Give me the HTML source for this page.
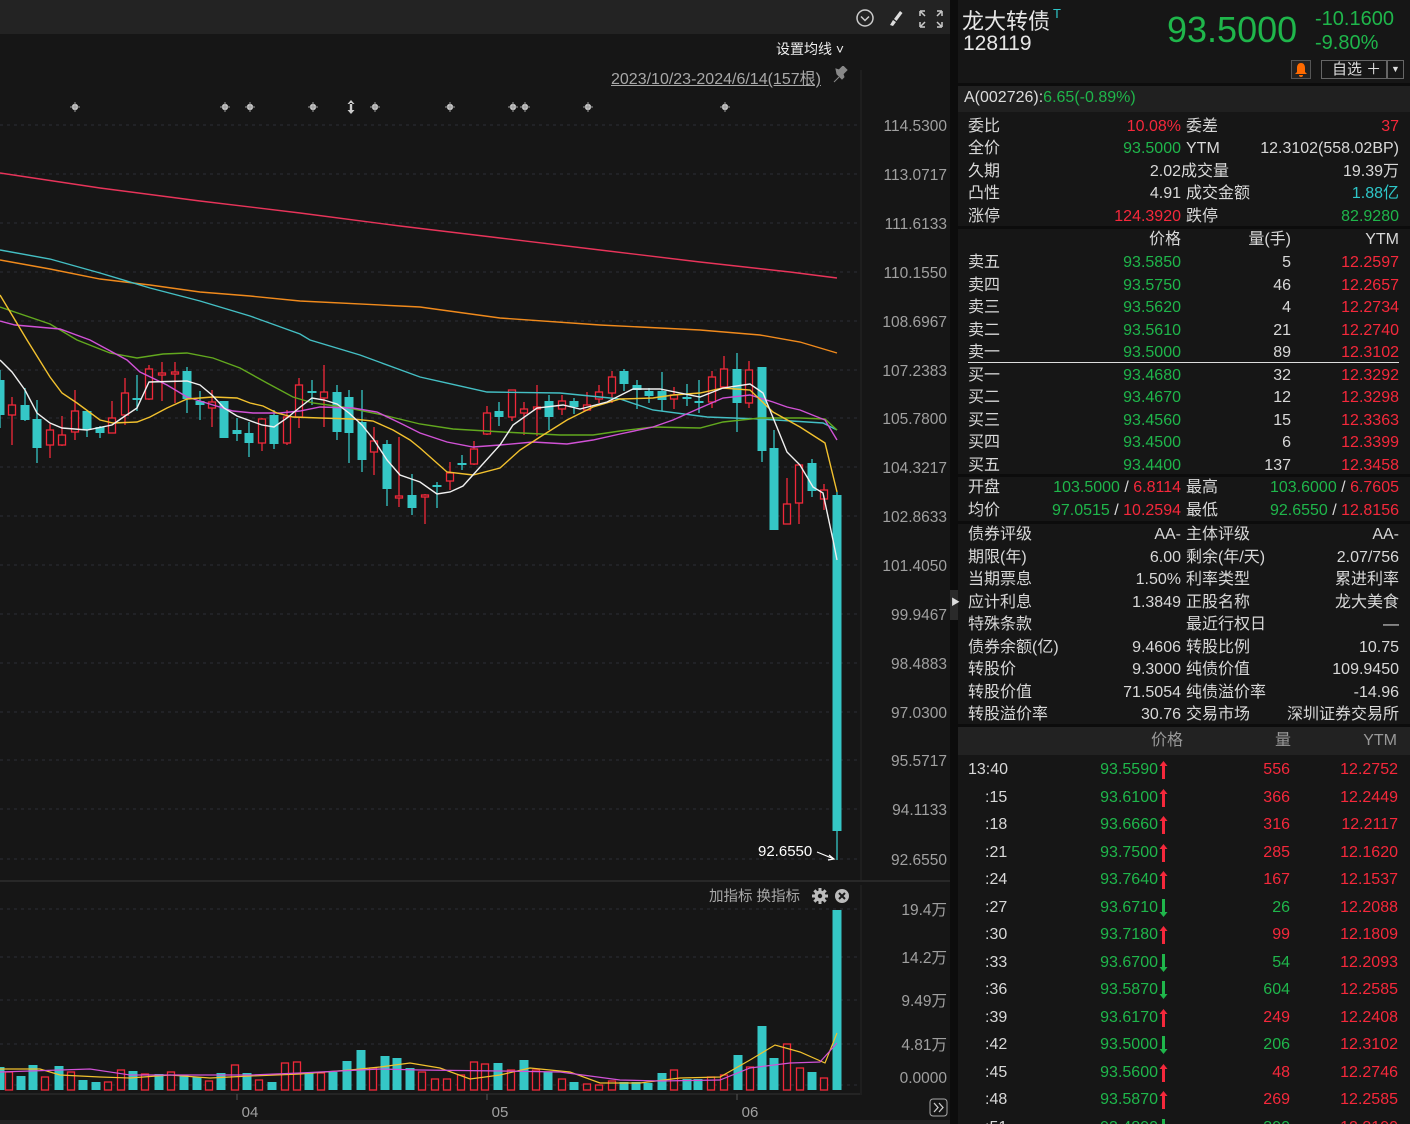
<!DOCTYPE html>
<html><head><meta charset="utf-8">
<style>
*{margin:0;padding:0;box-sizing:border-box}
html,body{width:1410px;height:1124px;overflow:hidden}
body{background:#161616;font-family:"Liberation Sans","Noto Sans CJK SC",sans-serif;color:#d8d8d8;position:relative}
.a{position:absolute;white-space:nowrap}
.g{color:#1fb64b}.r{color:#f5283b}.t{color:#2ec6c8}
.row{position:absolute;left:958px;width:452px;height:22px;font-size:16px;line-height:22px}
.row > span{position:absolute}
</style></head><body>
<div class="a" style="left:0;top:0;width:950px;height:34px;background:#232323"></div>
<svg class="a" style="left:855px;top:8px" width="90" height="22" viewBox="0 0 90 22">
 <circle cx="10" cy="10" r="8" fill="none" stroke="#ccc" stroke-width="1.5"/><path d="M6 8.5l4 4 4-4" fill="none" stroke="#ccc" stroke-width="1.5"/>
 <path d="M35 17l3-5 3 2-3 4z M39 11l6-8 2.5 2-6 8z" fill="#ddd"/>
 <path d="M65 3h5M65 3v5M87 3h-5M87 3v5M65 19h5M65 19v-5M87 19h-5M87 19v-5M66 4l4 4M86 4l-4 4M66 18l4-4M86 18l-4-4" stroke="#ccc" stroke-width="1.5" fill="none"/>
</svg>
<div class="a" style="left:776px;top:39px;font-size:14px;color:#eee">设置均线 ˅</div>
<div class="a" style="left:611px;top:65px;font-size:16px;color:#a8a8a8;text-decoration:underline">2023/10/23-2024/6/14(157根)</div>
<svg class="a" style="left:831px;top:66px" width="18" height="18"><path d="M3 16l5-5M6 8l5 5 2-2-1-3 4-4-4-4-4 4-3-1z" fill="#888" stroke="#888" stroke-width="1"/></svg>
<div class="a" style="left:950px;top:0;width:8px;height:1124px;background:#0c0c0c"></div>
<div class="a" style="left:950px;top:590px;width:8px;height:30px;background:#2a2a2a"></div>
<div class="a" style="left:951px;top:595px;font-size:9px;color:#ddd">▶</div>

<svg id="ch" class="a" style="left:0;top:0" width="950" height="1124"></svg>

<div class="a" style="left:962px;top:4px;font-size:22px;color:#e6e6e6">龙大转债<sup class="t" style="font-size:13px;vertical-align:top;position:relative;top:2px;margin-left:3px">T</sup></div>
<div class="a" style="left:963px;top:32px;font-size:21px;color:#e6e6e6">128119</div>
<div class="a g" style="left:1167px;top:9px;font-size:36px">93.5000</div>
<div class="a g" style="left:1315px;top:8px;font-size:20px">-10.1600</div>
<div class="a g" style="left:1315px;top:32px;font-size:20px">-9.80%</div>
<div class="a" style="left:1291px;top:60px;width:20px;height:19px;border:1px solid #555;background:#222"></div>
<svg class="a" style="left:1294px;top:62px" width="14" height="15"><path d="M7 1c3 0 4 2.5 4 5v4l2 2H1l2-2V6c0-2.5 1-5 4-5z M5 13h4a2 2 0 0 1-4 0z" fill="#ff6a00"/></svg>
<div class="a" style="left:1321px;top:60px;width:66px;height:19px;border:1px solid #666;font-size:15px;line-height:17px;color:#ddd;padding-left:10px">自选 ＋</div>
<div class="a" style="left:1387px;top:60px;width:17px;height:19px;border:1px solid #666;font-size:9px;line-height:17px;color:#ddd;text-align:center">▼</div>
<div class="a" style="left:958px;top:83px;width:452px;height:3px;background:#0c0c0c"></div>
<div class="a" style="left:958px;top:86px;width:452px;height:26px;background:#202020"></div>
<div class="a" style="left:964px;top:89px;font-size:16px;color:#ddd">A(002726):<span class="g">6.65(-0.89%)</span></div>

<div id="rp"></div>

<script>
const svg=document.getElementById('ch');
let h='';
const C='#35c7c6',R='#f0283a';
const ly=[125,174,223,272,321,370,418,467,516,565,614,663,712,760,809,859];
const lv=['114.5300','113.0717','111.6133','110.1550','108.6967','107.2383','105.7800','104.3217','102.8633','101.4050','99.9467','98.4883','97.0300','95.5717','94.1133','92.6550'];
ly.forEach((y,i)=>{h+=`<line x1="0" x2="860" y1="${y}" y2="${y}" stroke="#2c2f36" stroke-dasharray="3 4"/>`;h+=`<text x="947" y="${y+6}" text-anchor="end" font-size="15.5" fill="#a0a0a0">${lv[i]}</text>`;});
h+=`<line x1="861" x2="861" y1="70" y2="880" stroke="#262626"/>`;
h+=`<line x1="0" x2="950" y1="881" y2="881" stroke="#3a3a3a"/>`;
[[909,'19.4万'],[957,'14.2万'],[1000,'9.49万'],[1044,'4.81万'],[1085,'0.0000']].forEach(([y,t],i)=>{h+=`<line x1="0" x2="860" y1="${y}" y2="${y}" stroke="#2c2f36" stroke-dasharray="3 4"/>`;h+=`<text x="947" y="${i==4?y-2:y+6}" text-anchor="end" font-size="15.5" fill="#a0a0a0">${t}</text>`;});
h+=`<line x1="861" x2="861" y1="885" y2="1095" stroke="#262626"/>`;
[75,225,250,313,375,450,513,525,588,725].forEach(x=>{h+=`<circle cx="${x}" cy="107" r="3.2" fill="#ccc"/><path d="M${x-5} 107h10M${x} 102v10" stroke="#999" stroke-width="1"/>`;});
h+=`<path d="M351 100l-3.5 4h7zM351 114l-3.5-4h7z M349.8 103h2.4v8h-2.4z" fill="#ccc"/>`;
const cd=[
[0,380,415,370,428,C],[12,405,415,397,445,R],[25,405,420,388,421,C],[37,419,448,400,463,C],[50,430,445,424,458,R],[62,435,445,416,446,R],[75,411,432,390,440,R],[87,411,430,411,437,C],[100,427,433,426,438,C],[112,418,433,401,433,R],[125,393,415,378,425,R],[137,398,400,375,411,C],[149,369,399,365,400,R],[162,373,375,362,401,R],[175,372,374,362,403,R],[187,371,399,367,413,C],[200,401,405,391,420,C],[212,402,408,390,427,R],[224,401,438,401,438,C],[237,430,434,418,441,C],[249,433,443,422,457,C],[262,419,443,418,451,R],[274,415,444,410,449,C],[287,417,443,410,445,R],[299,385,417,378,428,R],[312,391,393,380,405,C],[324,392,398,365,427,R],[337,392,432,385,440,C],[349,397,433,390,463,C],[362,422,460,390,472,C],[374,441,452,427,475,R],[387,444,489,440,506,C],[399,496,498,437,507,R],[412,495,508,474,515,C],
[425,495,497,494,524,R],[437,485,487,482,508,C],[450,473,481,462,490,R],[462,463,465,455,470,C],[474,449,464,441,465,R],[487,413,434,406,435,R],[499,411,417,402,426,C],[512,390,417,390,421,R],[524,409,413,402,435,R],[537,407,409,385,436,R],[549,401,417,395,430,C],[562,401,409,395,415,R],[574,401,407,398,414,C],[587,405,410,392,411,R],[599,392,399,385,403,R],[612,377,393,371,403,R],[624,371,384,369,391,C],[637,385,390,380,409,C],[649,391,396,388,403,C],[662,391,400,372,411,C],[674,395,399,387,409,R],[687,397,399,384,406,C],[699,401,403,380,413,C],[712,377,402,371,408,R],[724,369,387,356,389,R],[737,369,403,353,432,C],[749,370,403,361,408,R],[762,367,451,367,462,C],[774,448,530,430,530,C],[787,504,524,478,524,R],[799,465,503,465,524,R],[812,463,491,459,497,C],[824,490,499,484,510,R],[837,495,831,492,860,C]];
cd.forEach(([x,t,b,hi,lo,c])=>{
 h+=`<line x1="${x}" x2="${x}" y1="${hi}" y2="${lo}" stroke="${c}" stroke-width="1.3"/>`;
 const bh=Math.max(b-t,1.5);
 if(c==R) h+=`<rect x="${x-3.5}" y="${t}" width="7" height="${bh}" fill="#161616" stroke="${R}" stroke-width="1.3"/>`;
 else h+=`<rect x="${x-4.5}" y="${t}" width="9" height="${bh}" fill="${C}"/>`;
});
function pl(pts,c,w){h+=`<polyline points="${pts}" fill="none" stroke="${c}" stroke-width="${w||1.4}"/>`;}
pl('0,173 100,188 200,201 300,213 400,226 500,238 600,250 700,262 790,272 837,278','#e8345a');
pl('0,260 50,269 100,279 150,285 200,292 250,296 300,301 400,306 420,307 500,318 600,325 700,330 760,335 800,342 837,353','#f08a1c');
pl('0,250 50,259 100,273 150,288 200,301 250,316 300,334 310,340 360,355 420,377 487,392 560,393 620,399 653,410 707,417 760,419 823,423 837,430','#44bfc4');
pl('0,307 50,324 77,340 110,353 137,358 163,354 187,353 213,358 240,368 267,383 293,397 313,403 343,407 383,415 420,424 453,429 503,432 560,435 593,435 620,431 653,427 700,428 723,422 760,418 800,418 825,419 837,430','#62a81e');
pl('0,321 15,325 60,329 90,340 127,360 140,372 167,385 187,397 213,405 233,411 253,413 280,413 300,411 320,407 353,408 377,412 400,423 420,433 447,442 473,447 500,445 533,442 567,444 593,440 620,434 653,427 673,420 700,408 723,398 750,395 773,402 787,407 800,410 825,420 837,440','#d152d6');
pl('0,295 27,340 50,377 62,393 77,403 100,420 113,423 137,422 150,417 167,408 187,399 213,397 237,398 250,403 263,406 277,413 293,417 320,418 353,419 373,421 393,430 410,440 420,448 447,472 473,475 500,468 520,450 540,437 567,420 593,407 620,399 653,398 673,395 700,393 723,388 750,390 773,412 800,427 825,443 837,492','#f2c12e');
pl('0,360 12,372 25,390 37,413 50,423 62,428 87,430 112,425 125,416 137,408 149,382 187,381 200,385 212,395 224,408 237,416 262,425 274,427 287,418 299,408 312,398 324,400 337,404 349,413 362,425 374,440 387,460 400,475 420,482 437,494 450,492 463,486 500,445 513,425 537,408 563,405 580,409 607,402 633,389 660,389 700,397 723,388 750,384 763,393 787,452 800,465 813,487 823,493 833,540 837,560','#f0f0f0');
h+=`<text x="758" y="856" font-size="15" fill="#fff">92.6550</text><path d="M817 852l17 7M829 855l5 4-6 1" stroke="#fff" fill="none" stroke-width="1.2"/>`;
h+=`<text x="709" y="901" font-size="14.5" fill="#a8a8a8">加指标 换指标</text>`;
h+=`<g transform="translate(820 896)" fill="#bbb"><circle r="5.5"/>`;for(let k=0;k<8;k++)h+=`<rect x="-1.5" y="-8" width="3" height="4" transform="rotate(${k*45})"/>`;h+=`<circle r="2.2" fill="#161616"/></g>`;
h+=`<circle cx="842" cy="896" r="7" fill="#bbb"/><path d="M839 893l6 6M845 893l-6 6" stroke="#161616" stroke-width="2"/>`;
const vb=[[0,1067,C],[9,1072,R],[21,1076,C],[33,1065,C],[45,1077,R],[59,1066,C],[71,1072,R],[83,1080,C],[96,1082,C],[108,1082,R],[121,1070,R],[133,1071,C],[145,1074,R],[159,1074,C],[171,1072,R],[184,1075,C],[197,1077,C],[209,1081,R],[221,1073,C],[235,1065,R],[247,1073,C],[259,1080,R],[272,1082,C],[285,1063,R],[297,1062,R],[309,1073,C],[321,1073,R],[333,1072,C],[347,1061,C],[361,1050,C],[373,1068,R],[385,1056,C],[397,1058,C],[410,1068,C],[422,1072,R],[435,1079,R],[447,1079,R],[461,1075,R],[474,1062,R],[485,1064,R],[498,1063,C],[511,1070,R],[524,1060,C],[536,1070,R],[548,1072,C],[562,1079,R],[574,1082,C],[587,1084,R],[599,1085,R],[612,1081,R],[624,1082,C],[636,1082,C],[648,1083,C],[662,1073,C],[674,1070,R],[687,1079,C],[698,1079,C],[711,1077,R],[724,1075,R],[738,1055,C],[750,1067,R],[762,1026,C],[774,1058,C],[787,1044,R],[800,1068,R],[812,1072,C],[824,1078,R],[837,910,C]];
vb.forEach(([x,t,c])=>{ if(c==R) h+=`<rect x="${x-3.5}" y="${t}" width="7" height="${1090-t}" fill="#161616" stroke="${R}" stroke-width="1.3"/>`; else h+=`<rect x="${x-4.5}" y="${t}" width="9" height="${1090-t}" fill="${C}"/>`;});
pl('0,1069 40,1069 60,1075 100,1077 130,1078 170,1075 210,1078 250,1076 300,1074 350,1070 380,1067 410,1063 440,1068 470,1079 500,1075 530,1068 570,1072 600,1083 640,1083 680,1078 720,1077 750,1060 775,1045 800,1052 825,1063 837,1033','#f2c12e',1.2);
pl('0,1072 90,1069 130,1075 250,1075 300,1073 380,1069 420,1070 500,1071 560,1072 620,1080 660,1081 720,1080 750,1068 790,1063 820,1062 837,1043','#d152d6',1.2);
h+=`<line x1="0" x2="860" y1="1094" y2="1094" stroke="#333"/>`;
[250,500,750].forEach((x,i)=>{h+=`<line x1="${x-13}" x2="${x-13}" y1="1094" y2="1100" stroke="#555"/><text x="${x}" y="1117" text-anchor="middle" font-size="15" fill="#a0a0a0">${['04','05','06'][i]}</text>`;});
h+=`<rect x="0" y="1120" width="950" height="4" fill="#222"/><rect x="930" y="1099" width="17" height="17" rx="3" fill="none" stroke="#aaa"/><path d="M934 1103l4 4.5-4 4.5M939 1103l4 4.5-4 4.5" stroke="#ccc" fill="none" stroke-width="1.3"/>`;
svg.innerHTML=h;

let r='';
function sep(y){r+=`<div class="a" style="left:958px;top:${y}px;width:452px;height:3px;background:#0c0c0c"></div>`;}
function row(y,cells){r+=`<div class="row" style="top:${y}px">`;cells.forEach(([txt,pos,cls,al])=>{ if(al=='r') r+=`<span class="${cls||''}" style="right:${1410-pos}px">${txt}</span>`; else r+=`<span class="${cls||''}" style="left:${pos-958}px">${txt}</span>`;});r+='</div>';}
row(116,[['委比',968],['10.08%',1181,'r','r'],['委差',1186],['37',1399,'r','r']]);
row(138,[['全价',968],['93.5000',1181,'g','r'],['YTM',1186],['12.3102(558.02BP)',1399,'','r']]);
row(161,[['久期',968],['2.02',1181,'','r'],['成交量',1181],['19.39万',1399,'','r']]);
row(183,[['凸性',968],['4.91',1181,'','r'],['成交金额',1186],['1.88亿',1399,'t','r']]);
row(206,[['涨停',968],['124.3920',1181,'r','r'],['跌停',1186],['82.9280',1399,'g','r']]);
sep(226);
row(229,[['价格',1181,'','r'],['量(手)',1291,'','r'],['YTM',1399,'','r']]);
const ob=[['卖五','93.5850','5','12.2597'],['卖四','93.5750','46','12.2657'],['卖三','93.5620','4','12.2734'],['卖二','93.5610','21','12.2740'],['卖一','93.5000','89','12.3102'],['买一','93.4680','32','12.3292'],['买二','93.4670','12','12.3298'],['买三','93.4560','15','12.3363'],['买四','93.4500','6','12.3399'],['买五','93.4400','137','12.3458']];
ob.forEach((o,i)=>row(252+i*22.5,[[o[0],968],[o[1],1181,'g','r'],[o[2],1291,'','r'],[o[3],1399,'r','r']]));
r+=`<div class="a" style="left:968px;top:362px;width:431px;height:1px;background:#ddd"></div>`;
sep(474);
row(477,[['开盘',968],['<span class="g">103.5000</span> / <span class="r">6.8114</span>',1181,'','r'],['最高',1186],['<span class="g">103.6000</span> / <span class="r">6.7605</span>',1399,'','r']]);
row(500,[['均价',968],['<span class="g">97.0515</span> / <span class="r">10.2594</span>',1181,'','r'],['最低',1186],['<span class="g">92.6550</span> / <span class="r">12.8156</span>',1399,'','r']]);
sep(521);
const inf=[['债券评级','AA-','主体评级','AA-'],['期限(年)','6.00','剩余(年/天)','2.07/756'],['当期票息','1.50%','利率类型','累进利率'],['应计利息','1.3849','正股名称','龙大美食'],['特殊条款','','最近行权日','—'],['债券余额(亿)','9.4606','转股比例','10.75'],['转股价','9.3000','纯债价值','109.9450'],['转股价值','71.5054','纯债溢价率','-14.96'],['转股溢价率','30.76','交易市场','深圳证券交易所']];
inf.forEach((o,i)=>row(524+i*22.5,[[o[0],968],[o[1],1181,'','r'],[o[2],1186],[o[3],1399,'','r']]));
sep(724);
r+=`<div class="a" style="left:958px;top:727px;width:452px;height:28px;background:#222"></div>`;
row(730,[['价格',1183,'','r'],['量',1291,'','r'],['YTM',1397,'','r']]);
r=r.replace(/(<div class="row" style="top:730px">)/,'<div class="row" style="top:730px;color:#999">');
const tk=[['13:40','93.5590',1,'556','12.2752'],[':15','93.6100',1,'366','12.2449'],[':18','93.6660',1,'316','12.2117'],[':21','93.7500',1,'285','12.1620'],[':24','93.7640',1,'167','12.1537'],[':27','93.6710',0,'26','12.2088'],[':30','93.7180',1,'99','12.1809'],[':33','93.6700',0,'54','12.2093'],[':36','93.5870',0,'604','12.2585'],[':39','93.6170',1,'249','12.2408'],[':42','93.5000',0,'206','12.3102'],[':45','93.5600',1,'48','12.2746'],[':48','93.5870',1,'269','12.2585'],[':51','93.4890',0,'390','12.3190']];
tk.forEach((o,i)=>{const y=759+i*27.5;const up=o[2];
 const arr=up?`<svg width="9" height="18" style="position:absolute;left:1159px;top:${y+2}px"><path d="M4.5 0l4 5H6v13H3V5H.5z" fill="#f5283b"/></svg>`:`<svg width="9" height="18" style="position:absolute;left:1159px;top:${y+2}px"><path d="M4.5 18l4-5H6V0H3v13H.5z" fill="#1fb64b"/></svg>`;
 row(y,[[o[0],o[0].length>3?968:985],[o[1],1158,'g','r'],[o[3],1290,up?'r':'g','r'],[o[4],1398,'r','r']]);
 r+=arr;});
document.getElementById('rp').innerHTML=r;
</script>
</body></html>
